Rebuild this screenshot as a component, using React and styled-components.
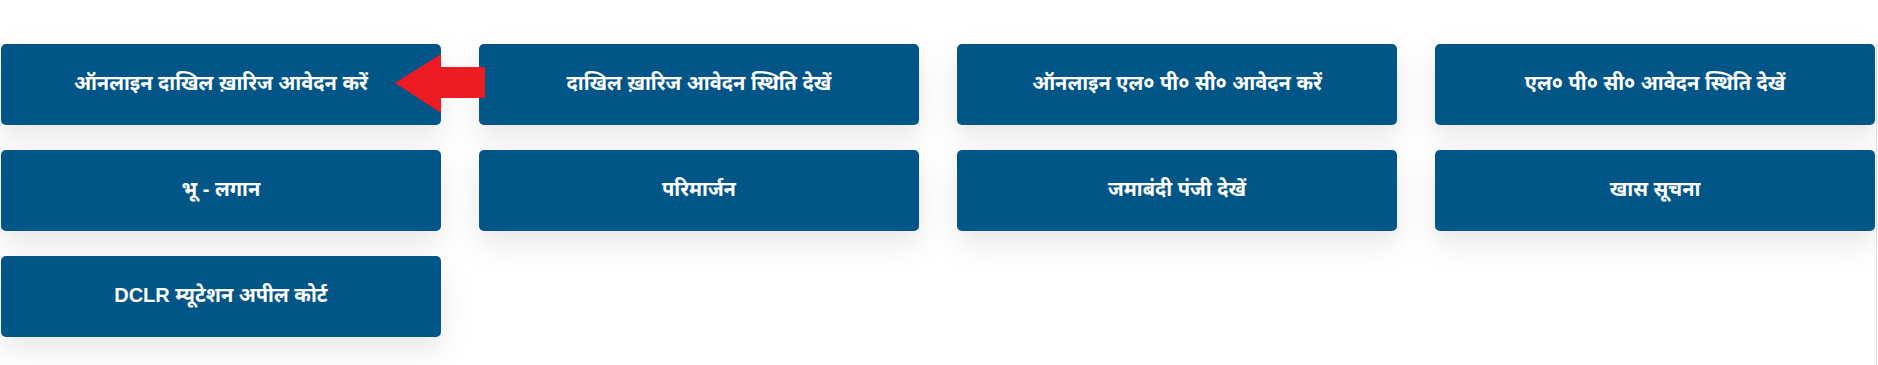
import React from 'react'
import styled, { createGlobalStyle } from 'styled-components';

const GlobalStyle = createGlobalStyle`
    html, body {
        margin: 0;
        padding: 0;
        background: #FFFFFF;
    }
`;

const Wrapper = styled.div`
    width: 1878px;
    height: 365px;
    box-sizing: border-box;
    padding-top: 44px;
    overflow: hidden;
`;

const Grid = styled.div`
    width: 1877px;
    height: 100%;
    box-sizing: border-box;
    padding-left: 1px;
    padding-right: 1px;
    border-right: 1px solid #E4E4E4;
    display: grid;
    grid-template-columns: repeat(4, 1fr);
    grid-auto-rows: 81px;
    column-gap: 38.33px;
    row-gap: 25px;
    align-content: start;
`;

const Card = styled.a`
    position: relative;
    display: flex;
    align-items: center;
    justify-content: center;
    padding-bottom: 3px;
    box-sizing: border-box;
    background: #025587;
    border-radius: 5px;
    box-shadow: 0px 12px 30px rgba(0, 0, 0, 0.1);
    color: #FFFFFF;
    text-decoration: none;
    font-family: "Liberation Sans", "Noto Sans", "Noto Sans Devanagari", sans-serif;
    font-weight: bold;
    font-size: 20px;
    line-height: 28px;
`;

const Arrow = styled.svg`
    position: absolute;
    top: 10px;
    right: -44px;
    width: 90px;
    height: 59px;
    z-index: 2;
`;

const links = [
    'ऑनलाइन दाखिल ख़ारिज आवेदन करें',
    'दाखिल ख़ारिज आवेदन स्थिति देखें',
    'ऑनलाइन एल० पी० सी० आवेदन करें',
    'एल० पी० सी० आवेदन स्थिति देखें',
    'भू - लगान',
    'परिमार्जन',
    'जमाबंदी पंजी देखें',
    'खास सूचना',
    'DCLR म्यूटेशन अपील कोर्ट',
];

const App = () => {
    return (
        <Wrapper>
            <GlobalStyle />
            <Grid>
                {links.map((label, i) => (
                    <Card key={label} href="#">
                        {label}
                        {i === 0 && (
                            <Arrow viewBox="0 0 90 59">
                                <polygon
                                    points="0,29 46,0 46,13 90,13 90,44 46,44 46,59"
                                    fill="#ED1C24"
                                />
                            </Arrow>
                        )}
                    </Card>
                ))}
            </Grid>
        </Wrapper>
    )
}

export default App;
